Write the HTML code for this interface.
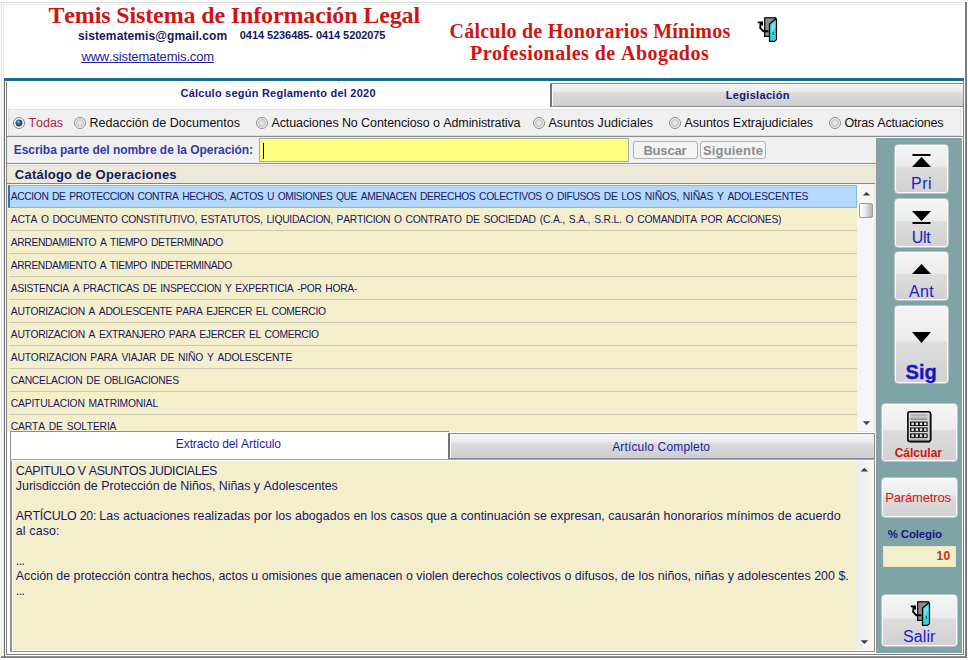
<!DOCTYPE html>
<html><head><meta charset="utf-8">
<style>
*{box-sizing:border-box;margin:0;padding:0}
html,body{width:968px;height:660px;overflow:hidden;background:#fff;font-family:"Liberation Sans",sans-serif}
#root{position:relative;width:968px;height:660px;background:#fff;overflow:hidden}
.a{position:absolute}
.t{position:absolute;white-space:pre;line-height:1;font-kerning:none}
.sep{position:absolute;left:9px;width:848px;height:1px;background:#cbc8b4}
.btn{position:absolute;border:1px solid #b9c4c5;border-radius:4px;background:linear-gradient(#f5f5f5 0%,#ececec 44%,#dcdcdc 48%,#d1d1d1 100%);box-shadow:inset 0 0 0 1px #fafafa}
.tabi{position:absolute;background:linear-gradient(#f5f5f5 0%,#ececec 30%,#dadada 44%,#cecece 100%);border:1px solid #8a8a8a;border-left:2px solid #747474;box-shadow:inset 1px 1px 0 #fafafa}
.radio{position:absolute;top:117px;width:12px;height:12px;border-radius:50%;border:1px solid #8c8e90;background:radial-gradient(circle at 50% 50%,#ececec 0,#d9d9d9 2.6px,#c4c4c4 3.6px,#f6f6f6 4.4px,#f0f0f0 6px)}
</style></head><body><div id="root">

<!-- window borders -->
<div class="a" style="left:0;top:2px;width:962px;height:1px;background:#dedede"></div>
<div class="a" style="left:0;top:4px;width:962px;height:1px;background:#ececec"></div>
<div class="a" style="left:1px;top:2px;width:1px;height:655px;background:#e2e2e2"></div>
<div class="a" style="left:3px;top:4px;width:1px;height:652px;background:#e9e9e9"></div>
<div class="a" style="left:965px;top:2px;width:2px;height:656px;background:linear-gradient(90deg,#8a8a8a,#6c6c6c)"></div>
<div class="a" style="left:1px;top:656px;width:966px;height:2px;background:linear-gradient(#9a9a9a,#6e6e6e)"></div>

<!-- blue line -->
<div class="a" style="left:4px;top:78px;width:960px;height:3px;background:linear-gradient(#2a7ba6,#166690 50%,#1b6e9b)"></div>

<!-- main frame -->
<div class="a" style="left:4px;top:81px;width:1px;height:576px;background:#6c6c6c"></div>
<div class="a" style="left:6px;top:82px;width:1px;height:573px;background:#7e7e7e"></div>
<div class="a" style="left:963px;top:81px;width:1px;height:574px;background:#7e7e7e"></div>
<div class="a" style="left:6px;top:654px;width:958px;height:1px;background:#7e7e7e"></div>

<!-- tabs -->
<div class="tabi" style="left:550px;top:83px;width:414px;height:24px"></div>

<!-- radios -->
<div class="a" style="left:8px;top:109px;width:953px;height:27px;background:#f0f0f0;border:1px solid #dedede"></div>
<div class="radio" style="left:13px;border-color:#7d8791;background:radial-gradient(circle at 42% 38%,rgba(150,225,245,.95) 0,rgba(150,225,245,0) 2px),radial-gradient(circle at 50% 50%,#2f8fb6 0,#17597c 2.4px,#103f5c 3.1px,#fdfdfd 3.9px,#f1f1f1 6px)"></div>
<div class="radio" style="left:74px"></div>
<div class="radio" style="left:256px"></div>
<div class="radio" style="left:533px"></div>
<div class="radio" style="left:669px"></div>
<div class="radio" style="left:829px"></div>

<!-- search row -->
<div class="a" style="left:7px;top:136px;width:956px;height:1px;background:#8c8c8c"></div>
<div class="a" style="left:7px;top:136px;width:869px;height:28px;background:#f0f0f0;border-top:1px solid #8c8c8c;border-bottom:1px solid #8c8c8c"></div>
<div class="a" style="left:259px;top:138px;width:370px;height:24px;background:#ffff80;border:1px solid #a6a6a6"></div>
<div class="a" style="left:263px;top:143px;width:1px;height:16px;background:#000"></div>
<div class="a" style="left:633px;top:141px;width:65px;height:18px;background:#f4f4f4;border:1px solid #adb2b5;border-radius:3px"></div>
<div class="a" style="left:700px;top:141px;width:66px;height:18px;background:#f4f4f4;border:1px solid #adb2b5;border-radius:3px"></div>

<!-- catalog header -->
<div class="a" style="left:7px;top:165px;width:869px;height:1px;background:#d4d4d4"></div>
<div class="a" style="left:7px;top:166px;width:869px;height:18px;background:#ece9d8"></div>

<!-- list -->
<div class="a" style="left:7px;top:183px;width:868px;height:249px;background:#f3eecb;border-top:1px solid #868686;box-shadow:inset 0 1px 0 #f6f4e6"></div>
<div class="a" style="left:8px;top:185px;width:849px;height:23px;background:#b5d9fb;border:1px solid #86b4e4;border-left:2px solid #3f6fae"></div>
<div class="sep" style="top:230px"></div><div class="sep" style="top:253px"></div><div class="sep" style="top:276px"></div>
<div class="sep" style="top:299px"></div><div class="sep" style="top:322px"></div><div class="sep" style="top:345px"></div>
<div class="sep" style="top:368px"></div><div class="sep" style="top:391px"></div><div class="sep" style="top:414px"></div>
<!-- list scrollbar -->
<div class="a" style="left:857px;top:185px;width:17px;height:246px;background:#f6f6f6"></div>
<div class="a" style="left:859px;top:203px;width:14px;height:15px;background:linear-gradient(90deg,#fbfbfb 15%,#e2e2e2 50%,#b9b9b9 92%);border:1px solid #9a9a9a;border-radius:2px"></div>
<svg class="a" style="left:858px;top:185px" width="16" height="246"><path d="M4.8 10.6 L8.5 6.9 L12.2 10.6Z" fill="#404040"/><path d="M4.8 236.2 L8.5 240 L12.2 236.2Z" fill="#404040"/></svg>
<div class="a" style="left:874px;top:184px;width:2px;height:248px;background:#ececec"></div>

<!-- tabs 2 -->
<div class="a" style="left:10px;top:431px;width:439px;height:29px;background:#fff;border-left:1px solid #8a8a8a;border-top:1px solid #8e8e8e"></div>
<div class="tabi" style="left:448px;top:433px;width:427px;height:26px"></div>
<div class="a" style="left:10px;top:459px;width:865px;height:1px;background:#a4a4a4"></div>

<!-- text area -->
<div class="a" style="left:10px;top:460px;width:865px;height:192px;background:#f3eecb;border:1px solid #8e8e8e;border-top:1px solid #fff;border-left:2px solid #939393;box-shadow:inset 1px 0 0 #fbfbee,inset 0 -1px 0 #fbfbee"></div>
<div class="a" style="left:856px;top:461px;width:18px;height:189px;background:linear-gradient(90deg,#ececec,#f8f8f8)"></div>
<svg class="a" style="left:856px;top:461px" width="17" height="189"><path d="M4.6 10.6 L8.4 6.8 L12.2 10.6Z" fill="#404040"/><path d="M4.6 179.2 L8.4 183 L12.2 179.2Z" fill="#404040"/></svg>

<!-- side panel -->
<div class="a" style="left:876px;top:138px;width:86px;height:515px;background:#7fa3a6;border-left:1px solid #8f9a9a"></div>
<div class="btn" style="left:894px;top:144px;width:55px;height:50px"></div>
<div class="btn" style="left:894px;top:198px;width:55px;height:50px"></div>
<div class="btn" style="left:894px;top:251px;width:55px;height:50px"></div>
<div class="btn" style="left:894px;top:305px;width:55px;height:79px"></div>
<svg class="a" style="left:894px;top:144px" width="55" height="240">
<rect x="18.5" y="10" width="18" height="2" fill="#000"/><path d="M18 23 L27.5 13 L37 23Z" fill="#000"/>
<path d="M18 67 L37 67 L27.5 77Z" fill="#000"/><rect x="18.5" y="78" width="18" height="2" fill="#000"/>
<path d="M18 130 L27.5 120 L37 130Z" fill="#000"/>
<path d="M18 188 L37 188 L27.5 199Z" fill="#000"/>
</svg>
<div class="btn" style="left:881px;top:403px;width:77px;height:59px"></div>
<div class="btn" style="left:881px;top:477px;width:77px;height:41px"></div>
<div class="a" style="left:883px;top:546px;width:73px;height:21px;background:#f3eecb;border:1px solid #e8e4c6"></div>
<div class="btn" style="left:881px;top:594px;width:77px;height:53px"></div>

<!-- calculator icon -->
<svg class="a" style="left:907px;top:410px" width="26" height="34" viewBox="0 0 26 34">
<rect x="0.9" y="1.8" width="22.6" height="29.6" rx="2" fill="#d6d6d6" stroke="#000" stroke-width="1.6"/>
<path d="M24 4 L24 30.5 M3 32 L23 32" stroke="#222" stroke-width="1" fill="none"/>
<rect x="3.4" y="4.6" width="17" height="1" fill="#8a8a8a"/>
<rect x="3.4" y="5.6" width="17" height="2.8" fill="#c4c4c4"/>
<rect x="3.4" y="8.6" width="17" height="1" fill="#6a6a6a"/>
<rect x="3" y="11.6" width="17.6" height="4.4" fill="#0a0a0a"/><rect x="4.4" y="12.6" width="2.5" height="2.5" fill="#e4e4e4"/><rect x="8.6" y="12.6" width="2.5" height="2.5" fill="#e4e4e4"/><rect x="12.8" y="12.6" width="2.5" height="2.5" fill="#e4e4e4"/><rect x="17.0" y="12.6" width="2.5" height="2.5" fill="#e4e4e4"/><rect x="3" y="17.4" width="17.6" height="4.4" fill="#0a0a0a"/><rect x="4.4" y="18.4" width="2.5" height="2.5" fill="#e4e4e4"/><rect x="8.6" y="18.4" width="2.5" height="2.5" fill="#e4e4e4"/><rect x="12.8" y="18.4" width="2.5" height="2.5" fill="#e4e4e4"/><rect x="17.0" y="18.4" width="2.5" height="2.5" fill="#e4e4e4"/><rect x="3" y="23.4" width="17.6" height="4.4" fill="#0a0a0a"/><rect x="4.4" y="24.4" width="2.5" height="2.5" fill="#e4e4e4"/><rect x="8.6" y="24.4" width="2.5" height="2.5" fill="#e4e4e4"/><rect x="12.8" y="24.4" width="2.5" height="2.5" fill="#e4e4e4"/><rect x="17.0" y="24.4" width="2.5" height="2.5" fill="#e4e4e4"/>
<rect x="3" y="28.6" width="17.6" height="0.9" fill="#9a9a9a"/>
</svg>

<!-- exit icons -->
<svg class="a" style="left:755px;top:15px" width="26" height="29" viewBox="0 0 26 29">
<rect x="9.7" y="2.8" width="11" height="18.6" fill="#8c8c8c" stroke="#000" stroke-width="1.2"/>
<path d="M14.5 9 L20.6 4 L21.5 4 L21.5 24.6 L19.6 26.4 L14.5 26.4Z" fill="#34d2dc" stroke="#000" stroke-width="1.2" stroke-linejoin="round"/>
<path d="M16 10 L20.2 6.4 L20.2 12 L16.4 18Z" fill="#6ee4ec"/>
<path d="M18 17 L18.6 20" stroke="#06545c" stroke-width="1"/>
<path d="M2.8 7.4 L8 7.4 M5.6 7.4 L5.2 13 L8.2 16.2 L13.4 16.2" fill="none" stroke="#000" stroke-width="1.9" stroke-linejoin="miter"/><path d="M5.5 7.4 L8 7.4 L8 10.6 L6.4 10.6Z" fill="#000"/>
</svg>
<svg class="a" style="left:908px;top:599px" width="26" height="29" viewBox="0 0 26 29">
<rect x="9.7" y="2.8" width="11" height="18.6" fill="#8c8c8c" stroke="#000" stroke-width="1.2"/>
<path d="M14.5 9 L20.6 4 L21.5 4 L21.5 24.6 L19.6 26.4 L14.5 26.4Z" fill="#34d2dc" stroke="#000" stroke-width="1.2" stroke-linejoin="round"/>
<path d="M16 10 L20.2 6.4 L20.2 12 L16.4 18Z" fill="#6ee4ec"/>
<path d="M18 17 L18.6 20" stroke="#06545c" stroke-width="1"/>
<path d="M2.8 7.4 L8 7.4 M5.6 7.4 L5.2 13 L8.2 16.2 L13.4 16.2" fill="none" stroke="#000" stroke-width="1.9" stroke-linejoin="miter"/><path d="M5.5 7.4 L8 7.4 L8 10.6 L6.4 10.6Z" fill="#000"/>
</svg>

<div class="t" style="left:48.42px;top:2.80px;font-family:'Liberation Serif',serif;font-size:24px;font-weight:bold;color:#d01414;letter-spacing:-0.131px;">Temis Sistema de Información Legal</div>
<div class="t" style="left:78.06px;top:29.54px;font-family:'Liberation Sans',sans-serif;font-size:12px;font-weight:bold;color:#17175f;letter-spacing:0.095px;">sistematemis@gmail.com</div>
<div class="t" style="left:239.81px;top:30.39px;font-family:'Liberation Sans',sans-serif;font-size:11px;font-weight:bold;color:#17175f;letter-spacing:-0.069px;">0414 5236485- 0414 5202075</div>
<div class="t" style="left:81.42px;top:50.20px;font-family:'Liberation Sans',sans-serif;font-size:13px;font-weight:normal;color:#1c1c9c;letter-spacing:-0.165px;text-decoration:underline;">www.sistematemis.com</div>
<div class="t" style="left:449.50px;top:21.15px;font-family:'Liberation Serif',serif;font-size:20px;font-weight:bold;color:#d01414;letter-spacing:0.243px;">Cálculo de Honorarios Mínimos</div>
<div class="t" style="left:470.00px;top:43.45px;font-family:'Liberation Serif',serif;font-size:20px;font-weight:bold;color:#d01414;letter-spacing:0.454px;">Profesionales de Abogados</div>
<div class="t" style="left:180.50px;top:87.69px;font-family:'Liberation Sans',sans-serif;font-size:11px;font-weight:bold;color:#18187a;letter-spacing:0.229px;">Cálculo según Reglamento del 2020</div>
<div class="t" style="left:725.80px;top:89.69px;font-family:'Liberation Sans',sans-serif;font-size:11px;font-weight:bold;color:#18187a;letter-spacing:0.316px;">Legislación</div>
<div class="t" style="left:28.44px;top:117.32px;font-family:'Liberation Sans',sans-serif;font-size:12.5px;font-weight:normal;color:#b0184c;letter-spacing:-0.031px;">Todas</div>
<div class="t" style="left:89.44px;top:117.32px;font-family:'Liberation Sans',sans-serif;font-size:12.5px;font-weight:normal;color:#111;letter-spacing:0.024px;">Redacción de Documentos</div>
<div class="t" style="left:271.44px;top:117.32px;font-family:'Liberation Sans',sans-serif;font-size:12.5px;font-weight:normal;color:#111;letter-spacing:-0.090px;">Actuaciones No Contencioso o Administrativa</div>
<div class="t" style="left:548.44px;top:117.32px;font-family:'Liberation Sans',sans-serif;font-size:12.5px;font-weight:normal;color:#111;letter-spacing:0.064px;">Asuntos Judiciales</div>
<div class="t" style="left:684.44px;top:117.32px;font-family:'Liberation Sans',sans-serif;font-size:12.5px;font-weight:normal;color:#111;letter-spacing:-0.028px;">Asuntos Extrajudiciales</div>
<div class="t" style="left:844.44px;top:117.32px;font-family:'Liberation Sans',sans-serif;font-size:12.5px;font-weight:normal;color:#111;letter-spacing:-0.188px;">Otras Actuaciones</div>
<div class="t" style="left:13.76px;top:144.14px;font-family:'Liberation Sans',sans-serif;font-size:12px;font-weight:bold;color:#3838ac;letter-spacing:-0.051px;">Escriba parte del nombre de la Operación:</div>
<div class="t" style="left:643.41px;top:144.20px;font-family:'Liberation Sans',sans-serif;font-size:13px;font-weight:bold;color:#8c8c8c;letter-spacing:-0.182px;">Buscar</div>
<div class="t" style="left:702.91px;top:144.20px;font-family:'Liberation Sans',sans-serif;font-size:13px;font-weight:bold;color:#8c8c8c;letter-spacing:0.182px;">Siguiente</div>
<div class="t" style="left:14.82px;top:168.00px;font-family:'Liberation Sans',sans-serif;font-size:13px;font-weight:bold;color:#17175f;letter-spacing:0.227px;">Catálogo de Operaciones</div>
<div class="t" style="left:10.84px;top:192.18px;font-family:'Liberation Sans',sans-serif;font-size:10.3px;font-weight:normal;color:#17175f;letter-spacing:-0.407px;word-spacing:1.2px;">ACCION DE PROTECCION CONTRA HECHOS, ACTOS U OMISIONES QUE </div>
<div class="t" style="left:360.74px;top:192.18px;font-family:'Liberation Sans',sans-serif;font-size:10.3px;font-weight:normal;color:#17175f;letter-spacing:-0.361px;word-spacing:1.2px;">AMENACEN DERECHOS COLECTIVOS O DIFUSOS DE </div>
<div class="t" style="left:621.14px;top:192.18px;font-family:'Liberation Sans',sans-serif;font-size:10.3px;font-weight:normal;color:#17175f;letter-spacing:-0.229px;word-spacing:1.2px;">LOS NIÑOS, NIÑAS Y ADOLESCENTES</div>
<div class="t" style="left:10.84px;top:215.18px;font-family:'Liberation Sans',sans-serif;font-size:10.3px;font-weight:normal;color:#17175f;letter-spacing:-0.282px;word-spacing:1.2px;">ACTA O DOCUMENTO CONSTITUTIVO, ESTATUTOS, LIQUIDACION, PARTICION O </div>
<div class="t" style="left:405.44px;top:215.18px;font-family:'Liberation Sans',sans-serif;font-size:10.3px;font-weight:normal;color:#17175f;letter-spacing:-0.178px;word-spacing:1.2px;">CONTRATO DE SOCIEDAD (C.A., S.A., S.R.L. O </div>
<div class="t" style="left:637.34px;top:215.18px;font-family:'Liberation Sans',sans-serif;font-size:10.3px;font-weight:normal;color:#17175f;letter-spacing:-0.241px;word-spacing:1.2px;">COMANDITA POR ACCIONES)</div>
<div class="t" style="left:10.84px;top:238.18px;font-family:'Liberation Sans',sans-serif;font-size:10.3px;font-weight:normal;color:#17175f;letter-spacing:-0.384px;word-spacing:1.2px;">ARRENDAMIENTO A TIEMPO DETERMINADO</div>
<div class="t" style="left:10.84px;top:261.18px;font-family:'Liberation Sans',sans-serif;font-size:10.3px;font-weight:normal;color:#17175f;letter-spacing:-0.396px;word-spacing:1.2px;">ARRENDAMIENTO A TIEMPO INDETERMINADO</div>
<div class="t" style="left:10.84px;top:284.18px;font-family:'Liberation Sans',sans-serif;font-size:10.3px;font-weight:normal;color:#17175f;letter-spacing:-0.313px;word-spacing:1.2px;">ASISTENCIA A PRACTICAS DE INSPECCION Y EXPERTICIA -POR HORA-</div>
<div class="t" style="left:10.84px;top:307.18px;font-family:'Liberation Sans',sans-serif;font-size:10.3px;font-weight:normal;color:#17175f;letter-spacing:-0.318px;word-spacing:1.2px;">AUTORIZACION A ADOLESCENTE PARA EJERCER EL COMERCIO</div>
<div class="t" style="left:10.84px;top:330.18px;font-family:'Liberation Sans',sans-serif;font-size:10.3px;font-weight:normal;color:#17175f;letter-spacing:-0.314px;word-spacing:1.2px;">AUTORIZACION A EXTRANJERO PARA EJERCER EL COMERCIO</div>
<div class="t" style="left:10.84px;top:353.18px;font-family:'Liberation Sans',sans-serif;font-size:10.3px;font-weight:normal;color:#17175f;letter-spacing:-0.187px;word-spacing:1.2px;">AUTORIZACION PARA VIAJAR DE NIÑO Y ADOLESCENTE</div>
<div class="t" style="left:10.84px;top:376.18px;font-family:'Liberation Sans',sans-serif;font-size:10.3px;font-weight:normal;color:#17175f;letter-spacing:-0.247px;word-spacing:1.2px;">CANCELACION DE OBLIGACIONES</div>
<div class="t" style="left:10.84px;top:399.18px;font-family:'Liberation Sans',sans-serif;font-size:10.3px;font-weight:normal;color:#17175f;letter-spacing:-0.189px;word-spacing:1.2px;">CAPITULACION MATRIMONIAL</div>
<div class="t" style="left:10.84px;top:422.18px;font-family:'Liberation Sans',sans-serif;font-size:10.3px;font-weight:normal;color:#17175f;letter-spacing:-0.164px;word-spacing:1.2px;">CARTA DE SOLTERIA</div>
<div class="t" style="left:175.86px;top:438.44px;font-family:'Liberation Sans',sans-serif;font-size:12px;font-weight:normal;color:#1c1ca4;letter-spacing:-0.111px;">Extracto del Artículo</div>
<div class="t" style="left:612.16px;top:440.84px;font-family:'Liberation Sans',sans-serif;font-size:12px;font-weight:normal;color:#1c1ca4;letter-spacing:0.157px;">Artículo Completo</div>
<div class="t" style="left:15.84px;top:464.50px;font-family:'Liberation Sans',sans-serif;font-size:12.4px;font-weight:normal;color:#17175f;letter-spacing:-0.377px;">CAPITULO V ASUNTOS JUDICIALES</div>
<div class="t" style="left:15.84px;top:479.57px;font-family:'Liberation Sans',sans-serif;font-size:12.4px;font-weight:normal;color:#17175f;letter-spacing:-0.006px;">Jurisdicción de Protección de Niños, Niñas y Adolescentes</div>
<div class="t" style="left:15.84px;top:509.71px;font-family:'Liberation Sans',sans-serif;font-size:12.4px;font-weight:normal;color:#17175f;letter-spacing:-0.251px;">ARTÍCULO 20: </div>
<div class="t" style="left:99.34px;top:509.71px;font-family:'Liberation Sans',sans-serif;font-size:12.4px;font-weight:normal;color:#17175f;letter-spacing:0.060px;">Las actuaciones realizadas por los abogados en los </div>
<div class="t" style="left:390.34px;top:509.71px;font-family:'Liberation Sans',sans-serif;font-size:12.4px;font-weight:normal;color:#17175f;letter-spacing:0.006px;">casos que a continuación se expresan, </div>
<div class="t" style="left:608.24px;top:509.71px;font-family:'Liberation Sans',sans-serif;font-size:12.4px;font-weight:normal;color:#17175f;letter-spacing:0.098px;">causarán honorarios mínimos de acuerdo</div>
<div class="t" style="left:15.84px;top:524.78px;font-family:'Liberation Sans',sans-serif;font-size:12.4px;font-weight:normal;color:#17175f;letter-spacing:0.145px;">al caso:</div>
<div class="t" style="left:15.84px;top:554.92px;font-family:'Liberation Sans',sans-serif;font-size:12.4px;font-weight:normal;color:#17175f;letter-spacing:-0.556px;">...</div>
<div class="t" style="left:15.84px;top:569.99px;font-family:'Liberation Sans',sans-serif;font-size:12.4px;font-weight:normal;color:#17175f;letter-spacing:-0.017px;">Acción de protección contra hechos, actos u omisiones que amenacen o violen </div>
<div class="t" style="left:451.94px;top:569.99px;font-family:'Liberation Sans',sans-serif;font-size:12.4px;font-weight:normal;color:#17175f;letter-spacing:0.014px;">derechos colectivos o difusos, de los </div>
<div class="t" style="left:657.74px;top:569.99px;font-family:'Liberation Sans',sans-serif;font-size:12.4px;font-weight:normal;color:#17175f;letter-spacing:0.027px;">niños, niñas y adolescentes 200 $.</div>
<div class="t" style="left:15.84px;top:585.06px;font-family:'Liberation Sans',sans-serif;font-size:12.4px;font-weight:normal;color:#17175f;letter-spacing:-0.556px;">...</div>
<div class="t" style="left:911.08px;top:176.46px;font-family:'Liberation Sans',sans-serif;font-size:16px;font-weight:normal;color:#2020c4;letter-spacing:0.439px;">Pri</div>
<div class="t" style="left:911.68px;top:230.46px;font-family:'Liberation Sans',sans-serif;font-size:16px;font-weight:normal;color:#2020c4;letter-spacing:-0.261px;">Ult</div>
<div class="t" style="left:908.88px;top:284.16px;font-family:'Liberation Sans',sans-serif;font-size:16px;font-weight:normal;color:#2020c4;letter-spacing:0.362px;">Ant</div>
<div class="t" style="left:905.50px;top:361.97px;font-family:'Liberation Sans',sans-serif;font-size:20px;font-weight:bold;color:#1414c8;letter-spacing:0.088px;-webkit-text-stroke:0.35px #1414c8;">Sig</div>
<div class="t" style="left:894.66px;top:446.54px;font-family:'Liberation Sans',sans-serif;font-size:12px;font-weight:bold;color:#d01414;letter-spacing:0.003px;">Cálcular</div>
<div class="t" style="left:885.21px;top:490.70px;font-family:'Liberation Sans',sans-serif;font-size:13px;font-weight:normal;color:#d01818;letter-spacing:-0.148px;">Parámetros</div>
<div class="t" style="left:887.78px;top:528.87px;font-family:'Liberation Sans',sans-serif;font-size:11.5px;font-weight:bold;color:#15158c;letter-spacing:-0.170px;">% Colegio</div>
<div class="t" style="left:936.46px;top:550.44px;font-family:'Liberation Sans',sans-serif;font-size:12px;font-weight:bold;color:#c83010;letter-spacing:0.421px;">10</div>
<div class="t" style="left:903.08px;top:629.46px;font-family:'Liberation Sans',sans-serif;font-size:16px;font-weight:normal;color:#2020c4;letter-spacing:0.081px;">Salir</div>
</div></body></html>
